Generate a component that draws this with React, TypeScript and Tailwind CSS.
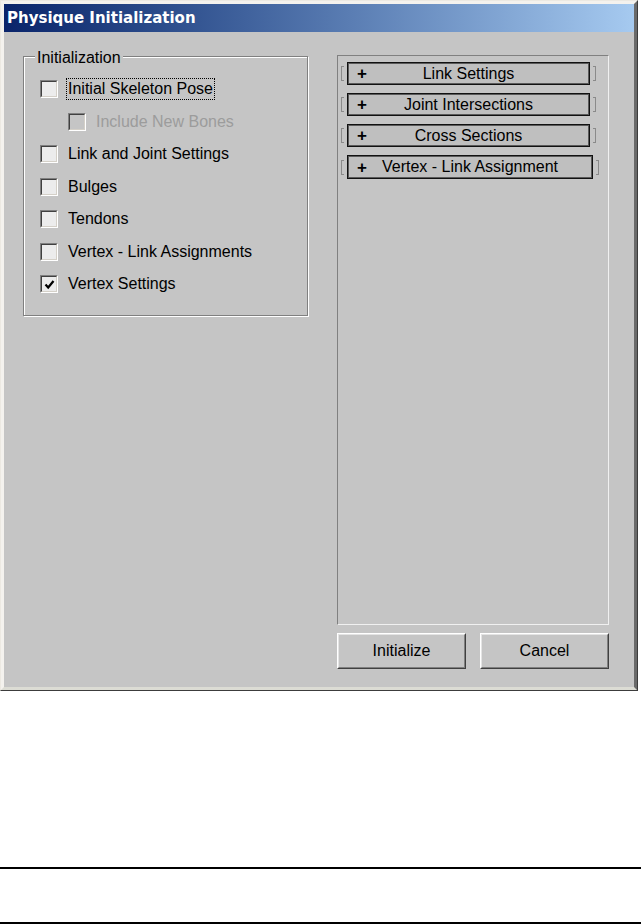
import React from "react";

// ── Classic 3D checkbox ─────────────────────────────

function CheckBox({ checked = false, disabled = false }: { checked?: boolean; disabled?: boolean }) {
  return (
    <span
      className={
        "w-[18px] h-[18px] shrink-0 border border-t-[#808080] border-l-[#808080] border-r-white border-b-white flex"
      }
    >
      <span
        className={
          "flex-1 border border-t-[#404040] border-l-[#404040] border-r-[#d4d0c8] border-b-[#d4d0c8] flex items-center justify-center " +
          (disabled ? "bg-[#c5c5c5]" : "bg-[#ececec]")
        }
      >
        {checked && (
          <svg width="11" height="11" viewBox="0 0 11 11">
            <path d="M1.5 5.5 L4.2 8.5 L9.5 2" fill="none" stroke="#000" strokeWidth="2.2" />
          </svg>
        )}
      </span>
    </span>
  );
}

function Row({
  label,
  checked,
  disabled,
  focused,
  indent,
}: {
  label: string;
  checked?: boolean;
  disabled?: boolean;
  focused?: boolean;
  indent?: boolean;
}) {
  return (
    <div className={"h-[32.5px] flex items-center " + (indent ? "pl-[28px]" : "")}>
      <CheckBox checked={checked} disabled={disabled} />
      <span
        className={
          "ml-[8px] px-[1px] leading-[20px] " +
          (focused ? "border border-dotted border-black" : "border border-transparent") +
          (disabled ? " text-[#9c9c9c]" : " text-black")
        }
      >
        {label}
      </span>
    </div>
  );
}

// ── Rollout bar with faint brackets ─────────────────

function Bracket({ side }: { side: "l" | "r" }) {
  return (
    <span
      className={
        "w-[3px] h-[15px] shrink-0 border-t border-b " +
        (side === "l" ? "border-l border-[#8a8a8a]" : "border-r border-[#8a8a8a]")
      }
    />
  );
}

function Rollout({ label, wide }: { label: string; wide?: boolean }) {
  return (
    <div className="flex items-center pl-[3px] gap-[3px]">
      <Bracket side="l" />
      <div
        className={
          (wide ? "w-[246px] h-[24px]" : "w-[243px] h-[23px]") +
          " border border-[#111] shadow-[inset_1px_1px_0_#5a5a5a,inset_-1px_-1px_0_#5a5a5a] bg-[#bfbfbf] grid grid-cols-[28px_1fr_28px] items-center"
        }
      >
        <span className="pl-[9px] font-bold text-[17px] leading-none">+</span>
        <span className="text-center leading-none whitespace-nowrap">{label}</span>
        <span />
      </div>
      <Bracket side="r" />
    </div>
  );
}

function Button({ label }: { label: string }) {
  return (
    <div className="w-[129px] h-[36px] border border-t-white border-l-white border-r-[#404040] border-b-[#404040] flex">
      <div className="flex-1 border border-t-[#e4e4e4] border-l-[#e4e4e4] border-r-[#808080] border-b-[#808080] flex items-center justify-center">
        {label}
      </div>
    </div>
  );
}

export default function App() {
  return (
    <div
      className="w-[641px] h-[924px] bg-white text-[16px] text-black"
      style={{ fontFamily: '"Liberation Sans", Arial, sans-serif' }}
    >
      {/* Dialog window */}
      <div className="w-[638px] h-[691px] border border-t-[#ece9e2] border-l-[#ece9e2] border-r-[#3c3c3c] border-b-[#3c3c3c] flex">
        <div className="flex-1 flex flex-col border-[3px] border-t-[#f4f2ee] border-l-[#f4f2ee] border-r-[#6a6a6a] border-b-[#dcdcd4] bg-[#c5c5c5]">
          {/* Title bar */}
          <div className="h-[28px] shrink-0 bg-gradient-to-r from-[#0a246a] to-[#a6caf0] flex items-center pl-[3px] pt-[1px]">
            <span
              className="text-white font-bold text-[15px]"
              style={{ fontFamily: '"DejaVu Sans", Verdana, sans-serif' }}
            >
              Physique Initialization
            </span>
          </div>

          {/* Body */}
          <div className="flex-1 flex pl-[19px] pt-[24px]">
            {/* Initialization group */}
            <div className="w-[285px] h-[260px] relative border border-[#808080] shadow-[inset_1px_1px_0_#fff,1px_1px_0_#fff] pt-[16px] pl-[16px]">
              <span className="absolute top-[-9px] left-[11px] bg-[#c5c5c5] px-[2px] leading-[20px]">
                Initialization
              </span>
              <Row label="Initial Skeleton Pose" focused />
              <Row label="Include New Bones" disabled indent />
              <Row label="Link and Joint Settings" />
              <Row label="Bulges" />
              <Row label="Tendons" />
              <Row label="Vertex - Link Assignments" />
              <Row label="Vertex Settings" checked />
            </div>

            {/* Right column */}
            <div className="ml-[29px] mt-[-1px] flex flex-col">
              <div className="w-[272px] h-[570px] border border-t-[#808080] border-l-[#808080] border-r-[#f0f0f0] border-b-[#f0f0f0] pt-[6px] flex flex-col gap-[8px]">
                <Rollout label="Link Settings" />
                <Rollout label="Joint Intersections" />
                <Rollout label="Cross Sections" />
                <Rollout label="Vertex - Link Assignment" wide />
              </div>
              <div className="mt-[8px] flex gap-[14px]">
                <Button label="Initialize" />
                <Button label="Cancel" />
              </div>
            </div>
          </div>
        </div>
      </div>

      {/* Page rules */}
      <div className="mt-[176px] h-[2px] bg-black" />
      <div className="mt-[53px] h-[2px] bg-black" />
    </div>
  );
}
